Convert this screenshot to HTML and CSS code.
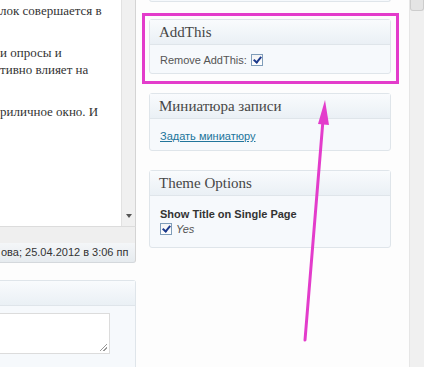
FILE: index.html
```html
<!DOCTYPE html>
<html lang="ru">

<head>
    <meta charset="UTF-8">
    <meta name="viewport" content="width=device-width, initial-scale=1.0">
    <title>Редактировать запись</title>
    <link rel="stylesheet" href="styles.css">
</head>

<body>
    <div class="screen">
        <div class="main">
            <div class="editor">
                <div class="editor-text">
                    <p>лок совершается в</p>
                    <p>и опросы и<br>тивно влияет на</p>
                    <p>риличное окно. И</p>
                </div>
                <div class="editor-scroll">
                    <span class="scroll-arrow"></span>
                </div>
            </div>
            <div class="editor-foot"></div>
            <div class="status">ова; 25.04.2012 в 3:06 пп</div>

            <div class="postbox wide">
                <h3 class="hndle">&nbsp;</h3>
                <div class="inside">
                    <div class="textarea"><span class="grip"></span></div>
                </div>
            </div>
        </div>

        <div class="side">
            <div class="postbox prev"></div>

            <div class="highlight">
                <div class="postbox">
                    <h3 class="hndle">AddThis</h3>
                    <div class="inside">
                        <label class="row">Remove AddThis: <span class="check"></span></label>
                    </div>
                </div>
            </div>

            <div class="postbox">
                <h3 class="hndle">Миниатюра записи</h3>
                <div class="inside">
                    <a href="#" class="thumb-link">Задать миниатюру</a>
                </div>
            </div>

            <div class="postbox">
                <h3 class="hndle">Theme Options</h3>
                <div class="inside">
                    <p class="opt-title">Show Title on Single Page</p>
                    <label class="row opt-row"><span class="check"></span> <i>Yes</i></label>
                </div>
            </div>
        </div>

        <div class="vscroll">
            <div class="vthumb"></div>
        </div>

        <svg class="arrow" width="424" height="367" viewBox="0 0 424 367">
            <line x1="305" y1="340" x2="323" y2="120" stroke="#e33ccb" stroke-width="3" stroke-linecap="round" />
            <polygon points="325,100 318,124 329,125" fill="#e33ccb" />
        </svg>
    </div>
</body>

</html>
```

FILE: styles.css
```css
body {
    margin: 0;
    padding: 0;
    background-color: #fdfdfd;
    font-family: "Liberation Sans", Arial, sans-serif;
    font-size: 11px;
    color: #333;
}

.screen {
    position: relative;
    width: 424px;
    height: 367px;
    overflow: hidden;
    display: flex;
}

.main {
    width: 136px;
    flex-shrink: 0;
}

.editor {
    height: 226px;
    display: flex;
    background-color: #fff;
    border-bottom: 1px solid #dcdcdc;
    border-right: 1px solid #d4d4d4;
}

.editor-text {
    flex: 1;
    padding-top: 2px;
    font-family: "Liberation Serif", Georgia, serif;
    font-size: 13px;
    line-height: 17px;
    color: #333;
    white-space: nowrap;
}

.editor-text p {
    margin: 0 0 25px;
}

.editor-scroll {
    width: 13px;
    background-color: #f0f0f0;
    border-left: 1px solid #e2e2e2;
    display: flex;
    align-items: flex-end;
    justify-content: center;
    padding-bottom: 8px;
}

.scroll-arrow {
    width: 0;
    height: 0;
    border-left: 3px solid transparent;
    border-right: 3px solid transparent;
    border-top: 4px solid #555;
}

.editor-foot {
    height: 16px;
    background-color: #efefef;
    border-right: 1px solid #d4d4d4;
}

.status {
    height: 19px;
    line-height: 19px;
    padding-left: 1px;
    background: linear-gradient(#f4f6f8, #e6ebef);
    border-bottom: 1px solid #d4d8dc;
    border-right: 1px solid #d4d4d4;
    border-bottom-right-radius: 3px;
    white-space: nowrap;
    color: #333;
}

.postbox {
    background-color: #f6f9fc;
    border: 1px solid #dfe5ea;
    border-radius: 3px;
}

.hndle {
    margin: 0;
    height: 24px;
    line-height: 25px;
    padding: 0 9px;
    font-family: "Liberation Serif", Georgia, serif;
    font-size: 15px;
    font-weight: normal;
    color: #464646;
    background: linear-gradient(#f9fbfd, #eaf0f5);
    border-bottom: 1px solid #dfe5ea;
    white-space: nowrap;
}

.inside {
    padding: 8px 10px 7px;
}

.wide {
    margin-top: 17px;
    border-left: 0;
    border-radius: 0 3px 0 0;
}

.wide .inside {
    padding: 7px 0 0;
    height: 60px;
}

.textarea {
    position: relative;
    width: 109px;
    height: 39px;
    background-color: #fff;
    border: 1px solid #dcdcdc;
    border-left: 0;
}

.grip {
    position: absolute;
    right: 2px;
    bottom: 2px;
    width: 7px;
    height: 7px;
    background: linear-gradient(135deg, transparent 45%, #999 45%, #999 55%, transparent 55%, transparent 70%, #999 70%, #999 80%, transparent 80%);
}

.side {
    width: 242px;
    margin-left: 13px;
    flex-shrink: 0;
}

.side .postbox {
    margin-bottom: 19px;
}

.side .prev {
    margin-top: -2px;
    margin-bottom: 11px;
    border-top: 0;
    height: 3px;
    border-radius: 0 0 3px 3px;
}

.highlight {
    margin: 0 -8px 9px -7px;
    padding: 3px 5px 7px 4px;
    border: 3px solid #e33ccb;
}

.side .highlight .postbox {
    margin-bottom: 0;
}

.row {
    display: flex;
    align-items: center;
    gap: 4px;
    height: 13px;
    color: #555;
}

.check {
    display: inline-block;
    width: 10px;
    height: 10px;
    border: 1px solid #7f9db9;
    background: linear-gradient(#f4f4f4, #fff);
    position: relative;
}

.check::after {
    content: "";
    position: absolute;
    left: 3px;
    top: 0;
    width: 3px;
    height: 6px;
    border: solid #1d3a8c;
    border-width: 0 2px 2px 0;
    transform: rotate(40deg);
}

.thumb-link {
    display: block;
    padding-top: 3px;
    line-height: 13px;
    color: #21759b;
    text-decoration: underline;
}

.opt-title {
    margin: 4px 0 1px;
    line-height: 13px;
    font-weight: bold;
    color: #333;
}

.opt-row {
    margin-bottom: 5px;
}

.row i {
    font-style: italic;
    color: #555;
}

.vscroll {
    margin-left: auto;
    width: 14px;
    background-color: #f0f0f0;
    border-left: 1px solid #e6e6e6;
}

.vthumb {
    height: 10px;
    background-color: #e4e4e4;
    border: 1px solid #cdcdcd;
    border-top: 0;
    border-radius: 0 0 3px 3px;
}

.arrow {
    position: absolute;
    left: 0;
    top: 0;
    pointer-events: none;
}
```
